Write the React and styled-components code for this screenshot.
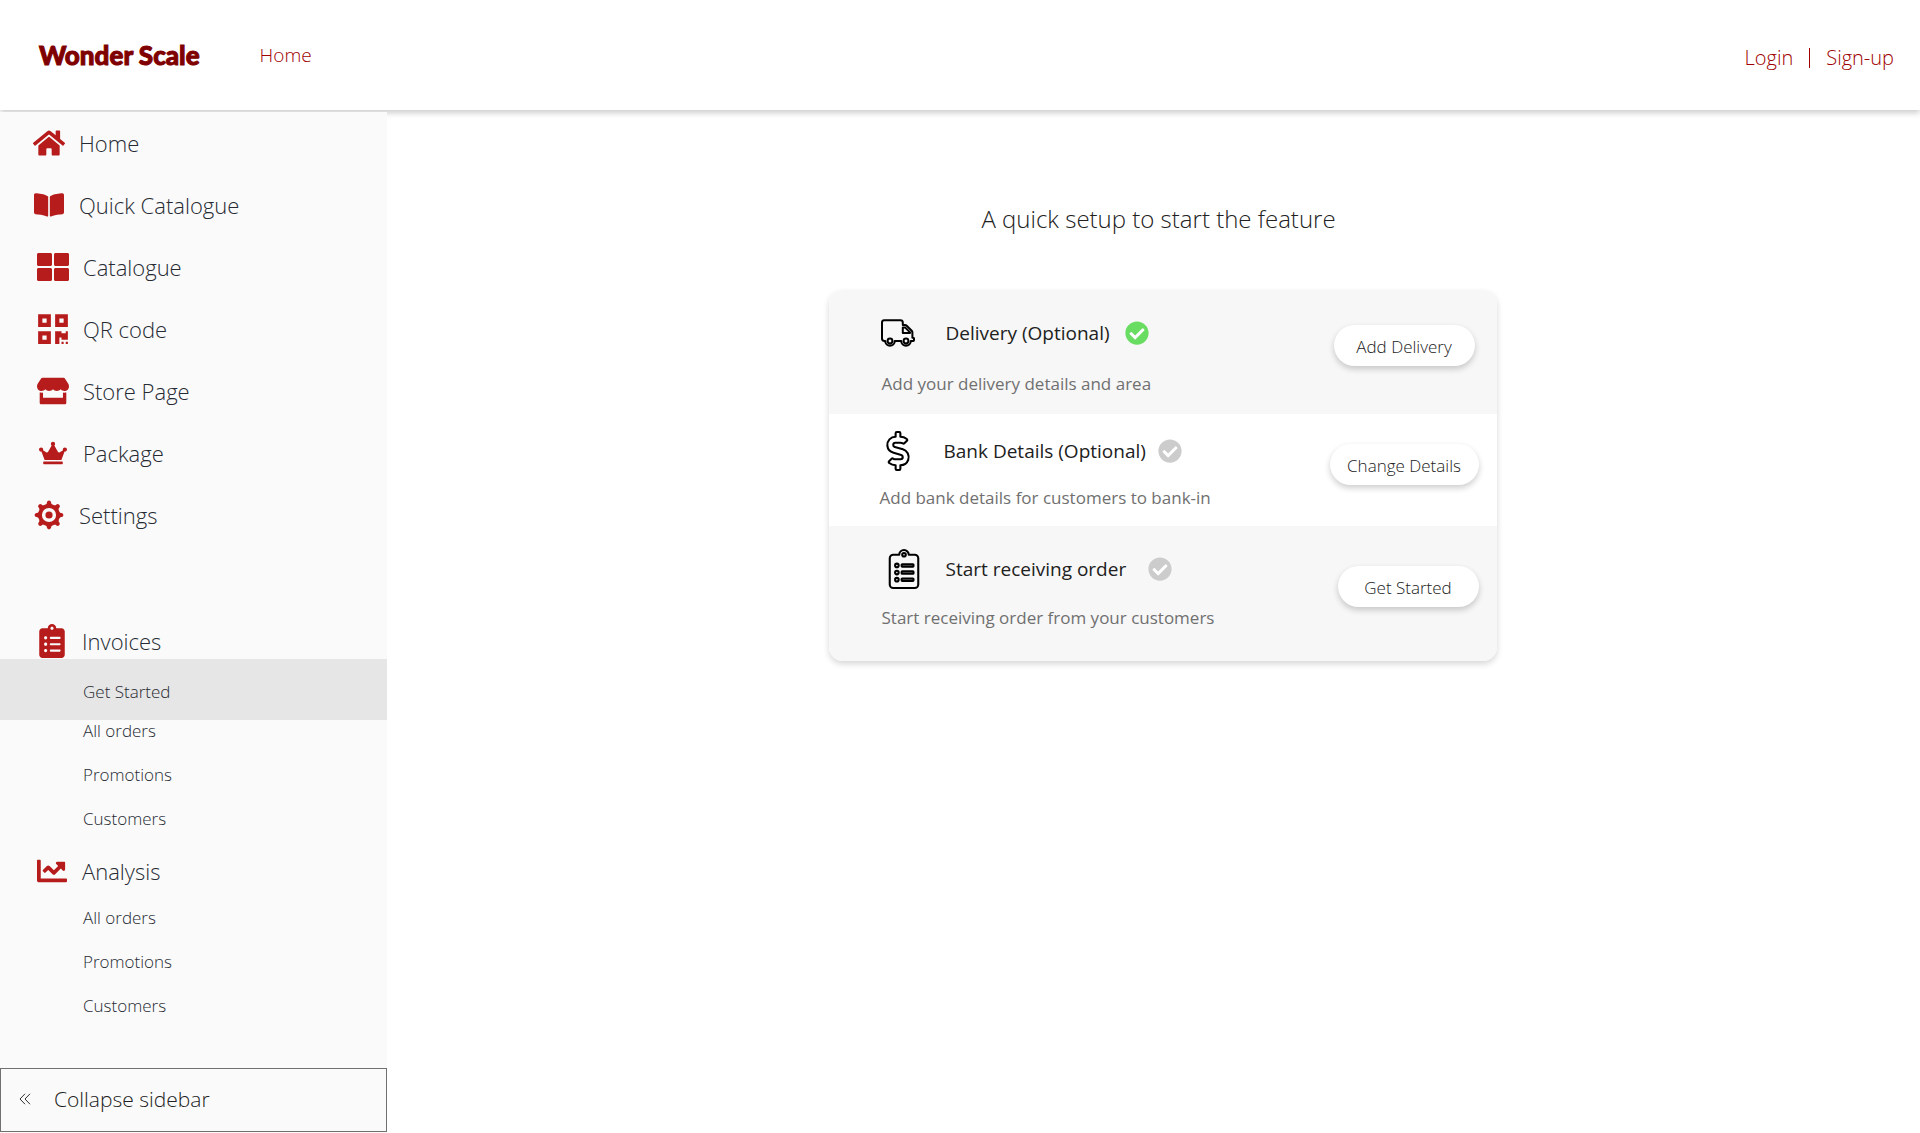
import React from "react";
import styled, { createGlobalStyle } from "styled-components";
import {
  FaHome,
  FaBookOpen,
  FaThLarge,
  FaQrcode,
  FaStore,
  FaCrown,
  FaClipboardList,
  FaChartLine,
  FaCheckCircle,
  FaTruck,
  FaDollarSign,
} from "react-icons/fa";

const GlobalStyle = createGlobalStyle`
  *, *::before, *::after { box-sizing: border-box; }
  body {
    margin: 0;
    background: #fff;
    color: #212121;
    font-family: "Open Sans", "Noto Sans", sans-serif;
    font-weight: 300;
  }
  a { color: inherit; text-decoration: none; }
  ul { list-style: none; margin: 0; padding: 0; }
  h1, h2, p { margin: 0; }
  button { font: inherit; color: inherit; cursor: pointer; }
`;

const Page = styled.div`
  min-height: 100vh;
  display: flex;
  flex-direction: column;
`;

const Header = styled.header`
  display: flex;
  align-items: center;
  height: 110px;
  padding: 0 26px 0 39px;
  color: #a00000;
  background: #fff;
  box-shadow: 0 3px 6px rgba(0, 0, 0, 0.2);
`;

const Logo = styled.a`
  color: #7f0000;
  font-family: "Bauhaus 93", Lato, sans-serif;
  font-size: 26px;
  font-weight: 900;
  line-height: 32px;
  -webkit-text-stroke: 1px #7f0000;
`;

const MainNav = styled.nav`
  margin-left: 60px;
  font-size: 19px;
  line-height: 28px;
`;

const Account = styled.nav`
  display: flex;
  align-items: center;
  margin-left: auto;
  padding-top: 6px;
  font-size: 20px;
  line-height: 28px;
`;

const Divider = styled.span`
  width: 1px;
  height: 20px;
  margin: 0 16px;
  background: #a00000;
`;

const Body = styled.div`
  flex: 1;
  display: flex;
  padding-top: 2px;
`;

const Sidebar = styled.aside`
  position: relative;
  flex: 0 0 387px;
  display: flex;
  flex-direction: column;
  padding-bottom: 1px;
  background: #fafafa;
  color: #262a33;
`;

const NavLink = styled.a`
  display: flex;
  align-items: center;
  gap: 14px;
  height: 62px;
  padding: 0 0 1px ${(p) => p.$inset}px;
  font-size: 22px;
`;

const IconSlot = styled.span`
  display: flex;
  justify-content: center;
  width: 32px;
  color: #b71c1c;
`;

const Group = styled.section`
  padding-top: ${(p) => p.$top}px;
`;

const GroupTitle = styled.h2`
  display: flex;
  align-items: center;
  gap: 14px;
  height: 36px;
  padding: 0 0 1px 36px;
  font-size: 22px;
  font-weight: 300;
`;

const ActiveLink = styled.a`
  display: flex;
  align-items: center;
  height: 61px;
  padding: 3px 0 0 83px;
  background: #e6e6e6;
  font-size: 17px;
`;

const SubList = styled.ul`
  display: flex;
  flex-direction: column;
  gap: 20px;
  padding: ${(p) => p.$top}px 0 0 83px;
  font-size: 17px;
  line-height: 24px;
`;

const SubItem = styled.li`
  height: 24px;

  a {
    display: block;
    line-height: 22px;
  }
`;

const Collapse = styled.button`
  display: flex;
  align-items: center;
  gap: 23px;
  height: 64px;
  margin-top: auto;
  padding: 0 0 2px 18px;
  border: 1px solid #707070;
  background: #fafafa;
  color: #212121;
  font-size: 21px;
`;

const Main = styled.main`
  flex: 1;
  display: flex;
  flex-direction: column;
  align-items: center;
  padding: 88px 0 40px 18px;
`;

const Title = styled.h1`
  padding-right: 8px;
  font-size: 24px;
  line-height: 38px;
  font-weight: 300;
`;

const Card = styled.section`
  width: 668px;
  max-width: 100%;
  margin-top: 52px;
  border-radius: 14px;
  overflow: hidden;
  background: #fff;
  box-shadow: 0 3px 6px rgba(0, 0, 0, 0.16);
`;

const Step = styled.div`
  display: flex;
  justify-content: space-between;
  align-items: flex-start;
  padding: ${(p) => p.$pad};
  background: ${(p) => (p.$shaded ? "#f7f7f7" : "#fff")};
`;

const StepText = styled.div`
  display: flex;
  flex-direction: column;
  gap: ${(p) => p.$gap}px;
`;

const StepHead = styled.div`
  display: flex;
  align-items: center;
  height: 40px;
`;

const StepIcon = styled.span`
  display: flex;
  width: 65px;
  padding-left: ${(p) => p.$inset}px;
  color: #000;

  svg {
    overflow: visible;
    fill: none;
    stroke: #000;
    stroke-width: ${(p) => p.$stroke}px;
    stroke-linejoin: round;
  }
`;

const StepName = styled.h2`
  font-size: 19px;
  line-height: 28px;
  font-weight: 400;
`;

const Status = styled.span`
  display: flex;
  margin-left: ${(p) => p.$gap}px;
  border-radius: 50%;
  background: radial-gradient(#fff 60%, transparent 62%);
  color: ${(p) => (p.$done ? "#69dc62" : "#cccccc")};
`;

const StepNote = styled.p`
  padding-left: 1px;
  color: #707070;
  font-size: 17px;
  line-height: 24px;
  font-weight: 400;
`;

const Pill = styled.button`
  width: ${(p) => p.$width}px;
  height: 41px;
  margin-top: ${(p) => p.$drop}px;
  padding: 2px 0 0;
  border: 0;
  border-radius: 21px;
  background: #fff;
  box-shadow: 0 3px 6px rgba(0, 0, 0, 0.2);
  font-size: 17px;
`;

function Gear() {
  const teeth = [0, 45, 90, 135, 180, 225, 270, 315];
  return (
    <svg width="30" height="30" viewBox="-15 -15 30 30" aria-hidden="true">
      <circle r="9" fill="none" stroke="currentColor" strokeWidth="3.8" />
      <circle r="3.6" fill="currentColor" />
      {teeth.map((a) => (
        <path
          key={a}
          transform={`rotate(${a})`}
          d="M-3.6 -10 Q-2 -11 -2.1 -12.6 Q-1.8 -14.4 0 -14.4 Q1.8 -14.4 2.1 -12.6 Q2 -11 3.6 -10 Z"
          fill="currentColor"
        />
      ))}
    </svg>
  );
}

function DoubleChevron() {
  return (
    <svg width="12" height="12" viewBox="0 0 12 12" fill="none" stroke="#333" aria-hidden="true">
      <path d="M6 0.8 L1 6 L6 11.2 M11 0.8 L6 6 L11 11.2" />
    </svg>
  );
}

const links = [
  { label: "Home", icon: <FaHome size={32} />, inset: 33 },
  { label: "Quick Catalogue", icon: <FaBookOpen size={30} />, inset: 33 },
  { label: "Catalogue", icon: <FaThLarge size={32} />, inset: 37 },
  { label: "QR code", icon: <FaQrcode size={34} />, inset: 37 },
  { label: "Store Page", icon: <FaStore size={32} />, inset: 37 },
  { label: "Package", icon: <FaCrown size={28} />, inset: 37 },
  { label: "Settings", icon: <Gear />, inset: 33 },
];

const reports = ["All orders", "Promotions", "Customers"];

const steps = [
  {
    name: "Delivery (Optional)",
    note: "Add your delivery details and area",
    action: "Add Delivery",
    icon: <FaTruck size={32} />,
    inset: 1,
    stroke: 40,
    done: true,
    shaded: true,
    pad: "23px 22px 18px 52px",
    gap: 19,
    statusGap: 15,
    width: 141,
    drop: 12,
  },
  {
    name: "Bank Details (Optional)",
    note: "Add bank details for customers to bank-in",
    action: "Change Details",
    icon: <FaDollarSign size={38} />,
    inset: 0,
    stroke: 28,
    pad: "17px 18px 16px 50px",
    gap: 15,
    statusGap: 12,
    width: 149,
    drop: 13,
  },
  {
    name: "Start receiving order",
    note: "Start receiving order from your customers",
    action: "Get Started",
    icon: <FaClipboardList size={38} />,
    inset: 4,
    stroke: 28,
    shaded: true,
    pad: "23px 18px 31px 52px",
    gap: 17,
    statusGap: 22,
    width: 141,
    drop: 17,
  },
];

function SubLinks({ top }) {
  return (
    <SubList $top={top}>
      {reports.map((r) => (
        <SubItem key={r}>
          <a href="#">{r}</a>
        </SubItem>
      ))}
    </SubList>
  );
}

export default function App() {
  return (
    <Page>
      <GlobalStyle />
      <Header>
        <Logo href="#">Wonder Scale</Logo>
        <MainNav>
          <a href="#">Home</a>
        </MainNav>
        <Account>
          <a href="#">Login</a>
          <Divider />
          <a href="#">Sign-up</a>
        </Account>
      </Header>
      <Body>
        <Sidebar>
          <nav>
            {links.map((l) => (
              <NavLink key={l.label} href="#" $inset={l.inset}>
                <IconSlot>{l.icon}</IconSlot>
                {l.label}
              </NavLink>
            ))}
          </nav>
          <Group $top={77}>
            <GroupTitle>
              <IconSlot>
                <FaClipboardList size={34} />
              </IconSlot>
              Invoices
            </GroupTitle>
            <ActiveLink href="#">Get Started</ActiveLink>
            <SubLinks top={0} />
          </Group>
          <Group $top={21}>
            <GroupTitle>
              <IconSlot>
                <FaChartLine size={30} />
              </IconSlot>
              Analysis
            </GroupTitle>
            <SubLinks top={18} />
          </Group>
          <Collapse type="button">
            <DoubleChevron />
            Collapse sidebar
          </Collapse>
        </Sidebar>
        <Main>
          <Title>A quick setup to start the feature</Title>
          <Card>
            {steps.map((s) => (
              <Step key={s.name} $pad={s.pad} $shaded={s.shaded}>
                <StepText $gap={s.gap}>
                  <StepHead>
                    <StepIcon $inset={s.inset} $stroke={s.stroke}>
                      {s.icon}
                    </StepIcon>
                    <StepName>{s.name}</StepName>
                    <Status $gap={s.statusGap} $done={s.done}>
                      <FaCheckCircle size={24} />
                    </Status>
                  </StepHead>
                  <StepNote>{s.note}</StepNote>
                </StepText>
                <Pill type="button" $width={s.width} $drop={s.drop}>
                  {s.action}
                </Pill>
              </Step>
            ))}
          </Card>
        </Main>
      </Body>
    </Page>
  );
}
